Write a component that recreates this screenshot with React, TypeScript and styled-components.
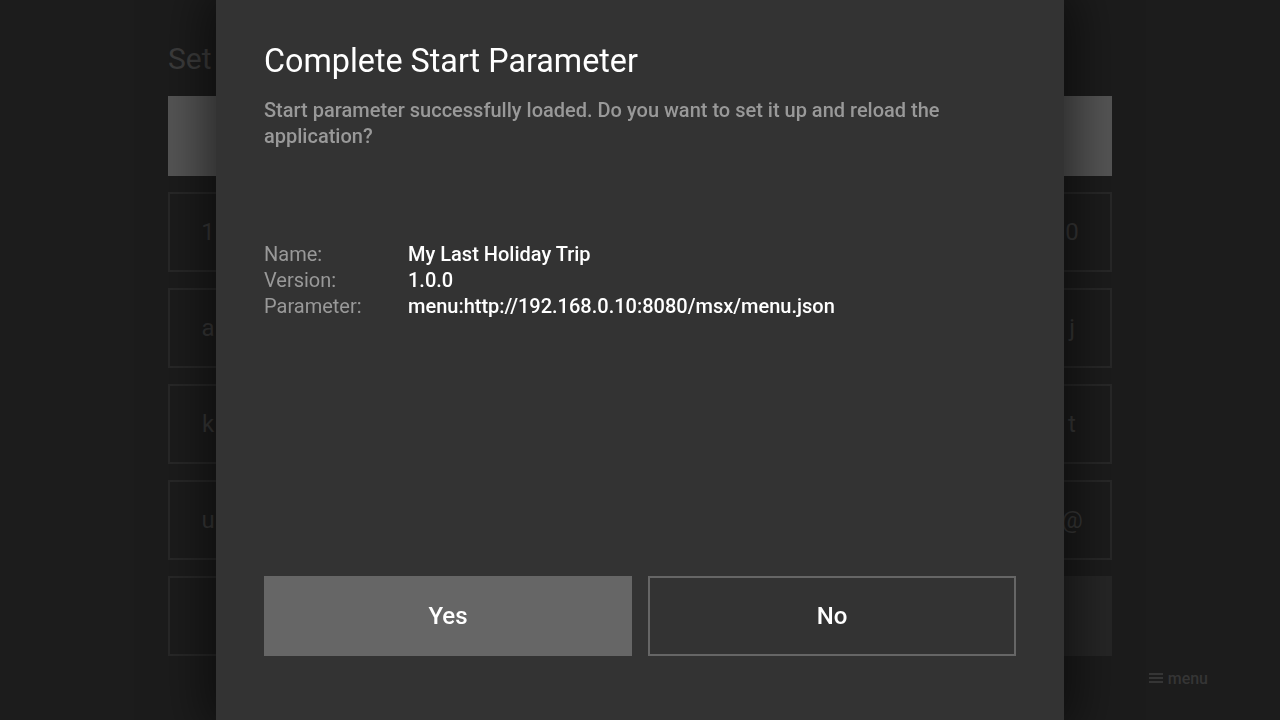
import React from "react";
import styled, { createGlobalStyle } from "styled-components";

const GlobalStyle = createGlobalStyle`
  html, body { margin: 0; padding: 0; width: 100%; height: 100%; overflow: hidden; }
  body { background: #1c1c1c; font-family: Roboto, "Liberation Sans", Arial, sans-serif; }
  * { box-sizing: border-box; }
`;

const Page = styled.div`
  width: 1280px;
  height: 720px;
  display: flex;
  flex-direction: column;
  align-items: center;
  padding-top: 40px;
`;

const Column = styled.div`
  width: 944px;
  display: flex;
  flex-direction: column;
  gap: 16px;
`;

const PageTitle = styled.h1`
  margin: 0;
  height: 40px;
  line-height: 38px;
  font-size: 30px;
  font-weight: 400;
  color: #3c3c3c;
`;

const InputBar = styled.div`
  height: 80px;
  background: #555555;
`;

const Keyboard = styled.div`
  display: grid;
  grid-template-columns: repeat(10, 80px);
  grid-auto-rows: 80px;
  gap: 16px;
`;

const Key = styled.div<{ $span?: number; $filled?: boolean }>`
  grid-column: span ${(p) => p.$span ?? 1};
  display: flex;
  align-items: center;
  justify-content: center;
  border: 2px solid ${(p) => (p.$filled ? "transparent" : "#282828")};
  background: ${(p) => (p.$filled ? "#262626" : "transparent")};
  color: #383838;
  font-size: 24px;
`;

const Footer = styled.div`
  width: 100%;
  display: flex;
  justify-content: flex-end;
  padding: 10px 72px 0 0;
`;

const MenuHint = styled.div`
  display: flex;
  align-items: center;
  gap: 5px;
  height: 24px;
  color: #353535;
  font-size: 16px;
  font-weight: 500;
`;

const Overlay = styled.div`
  position: fixed;
  inset: 0;
  display: flex;
  justify-content: center;
`;

const Dialog = styled.div`
  width: 848px;
  height: 720px;
  background: #333333;
  box-shadow: 0 0 48px 10px rgba(0, 0, 0, 0.55);
  display: flex;
  flex-direction: column;
  padding: 40px 48px 64px;
`;

const DialogTitle = styled.h2`
  margin: 0;
  font-size: 32.3px;
  line-height: 42px;
  font-weight: 400;
  color: #ffffff;
`;

const Description = styled.p`
  margin: 15px 0 0;
  font-size: 20px;
  font-weight: 500;
  line-height: 26px;
  color: #999999;
`;

const InfoTable = styled.div`
  margin-top: 92px;
  display: grid;
  grid-template-columns: 144px 1fr;
  grid-auto-rows: 26px;
  font-size: 20px;
  line-height: 26px;
`;

const Label = styled.div`
  color: #999999;
`;

const Value = styled.div`
  color: #ffffff;
  font-weight: 500;
`;

const Buttons = styled.div`
  margin-top: auto;
  display: grid;
  grid-template-columns: 1fr 1fr;
  gap: 16px;
`;

const Button = styled.button<{ $focused?: boolean }>`
  height: 80px;
  border: 2px solid #666666;
  background: ${(p) => (p.$focused ? "#666666" : "#333333")};
  color: #ffffff;
  font-family: Roboto, "Liberation Sans", Arial, sans-serif;
  font-size: 24px;
  font-weight: 500;
  cursor: pointer;
`;

const rows = [
  ["1", "2", "3", "4", "5", "6", "7", "8", "9", "0"],
  ["a", "b", "c", "d", "e", "f", "g", "h", "i", "j"],
  ["k", "l", "m", "n", "o", "p", "q", "r", "s", "t"],
  ["u", "v", "w", "x", "y", "z", ".", "-", "_", "@"],
];

const info: [string, string][] = [
  ["Name:", "My Last Holiday Trip"],
  ["Version:", "1.0.0"],
  ["Parameter:", "menu:http://192.168.0.10:8080/msx/menu.json"],
];

export default function App() {
  return (
    <>
      <GlobalStyle />
      <Page>
        <Column>
          <PageTitle>Set Start Parameter</PageTitle>
          <InputBar />
          <Keyboard>
            {rows.flat().map((k, i) => (
              <Key key={i}>{k}</Key>
            ))}
            <Key $span={2} />
            <Key $span={2} />
            <Key $span={2} />
            <Key $span={2} />
            <Key $span={2} $filled />
          </Keyboard>
        </Column>
        <Footer>
          <MenuHint>
            <svg width="14" height="12" viewBox="0 0 14 12">
              <rect x="0" y="1" width="14" height="2" fill="#353535" />
              <rect x="0" y="5" width="14" height="2" fill="#353535" />
              <rect x="0" y="9" width="14" height="2" fill="#353535" />
            </svg>
            menu
          </MenuHint>
        </Footer>
      </Page>
      <Overlay>
        <Dialog>
          <DialogTitle>Complete Start Parameter</DialogTitle>
          <Description>
            Start parameter successfully loaded. Do you want to set it up and reload the application?
          </Description>
          <InfoTable>
            {info.map(([l, v]) => (
              <React.Fragment key={l}>
                <Label>{l}</Label>
                <Value>{v}</Value>
              </React.Fragment>
            ))}
          </InfoTable>
          <Buttons>
            <Button $focused>Yes</Button>
            <Button>No</Button>
          </Buttons>
        </Dialog>
      </Overlay>
    </>
  );
}
